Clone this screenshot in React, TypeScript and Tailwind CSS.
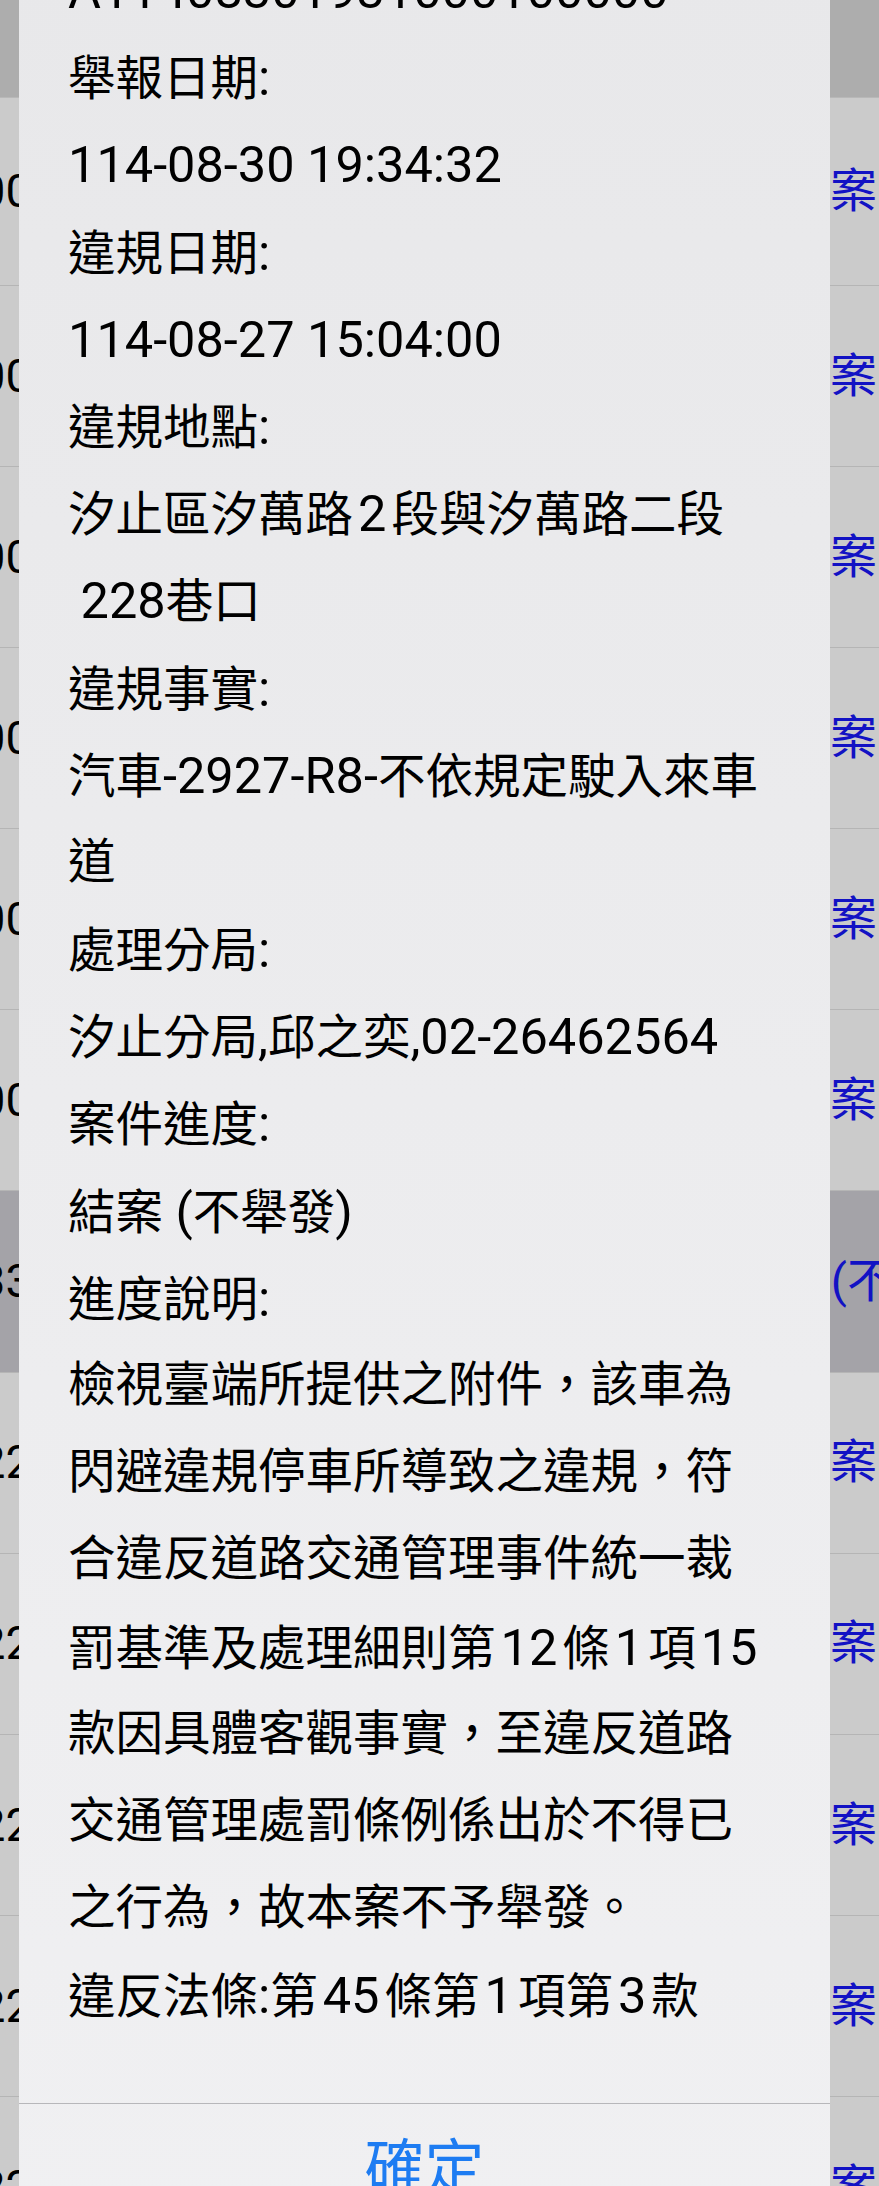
import React from 'react';

const renderLine = (text: string) =>
    text.split(/(\[[^\]]+\]|[\x20-\u02FF]+)/).filter(Boolean).map((part, i) => {
        if (part.startsWith('[') && part.endsWith(']') && part.length > 2) {
            return <span key={i} className="mx-[5px] text-[50.5px]">{part.slice(1, -1)}</span>;
        }
        if (/^[\x20-\u02FF]+$/.test(part)) {
            return <span key={i} className="text-[50.5px]">{part}</span>;
        }
        return <span key={i}>{part}</span>;
    });

const lines: string[] = [
    'A11408301931000100000',
    '舉報日期:',
    '114-08-30 19:34:32',
    '違規日期:',
    '114-08-27 15:04:00',
    '違規地點:',
    '汐止區汐萬路[2]段與汐萬路二段',
    ' 228巷口',
    '違規事實:',
    '汽車-2927-R8-不依規定駛入來車',
    '道',
    '處理分局:',
    '汐止分局,邱之奕,02-26462564',
    '案件進度:',
    '結案 (不舉發)',
    '進度說明:',
    '檢視臺端所提供之附件，該車為',
    '閃避違規停車所導致之違規，符',
    '合違反道路交通管理事件統一裁',
    '罰基準及處理細則第[12]條[1]項[15]',
    '款因具體客觀事實，至違反道路',
    '交通管理處罰條例係出於不得已',
    '之行為，故本案不予舉發。',
    '違反法條:第[45]條第[1]項第[3]款',
];

// rows of the dimmed list behind the alert
const rows = [
    { left: '00', right: '案', dark: false, first: true },
    { left: '00', right: '案', dark: false },
    { left: '00', right: '案', dark: false },
    { left: '00', right: '案', dark: false },
    { left: '00', right: '案', dark: false },
    { left: '00', right: '案', dark: false },
    { left: '33', right: '(不舉發)', dark: true },
    { left: '22', right: '案', dark: false },
    { left: '22', right: '案', dark: false },
    { left: '22', right: '案', dark: false },
    { left: '22', right: '案', dark: false },
    { left: '22', right: '案', dark: false },
];

const App: React.FC = () => {
    return (
        <div className="relative w-[879px] h-[2186px] overflow-hidden bg-[#cbcbcb] font-['Roboto','Noto_Sans_CJK_TC',sans-serif]">
            {/* background list */}
            <div className="flex flex-col">
                <div className="h-[98px] shrink-0 bg-[#adadad] border-b border-[#b8b8b8]" />
                {rows.map((row, i) => (
                    <div
                        key={i}
                        className={`${row.first ? 'h-[188px]' : 'h-[181.1px]'} shrink-0 flex items-center border-b border-[#b5b5b5] text-[47px] ${row.dark ? 'bg-[#a4a3a8]' : 'bg-[#cbcbcb]'}`}
                    >
                        <div className="-ml-[21px] w-[60px] text-black whitespace-nowrap">{row.left}</div>
                        <div className={`ml-[791px] whitespace-nowrap text-[#1212c4] ${row.dark ? 'pl-[8px]' : ''}`}>
                            {row.right}
                        </div>
                    </div>
                ))}
            </div>

            {/* alert */}
            <div className="absolute left-[19px] top-[-53px] w-[811px] bg-linear-to-b from-[#e8e8ea] to-[#f0f0f2]">
                <div className="pl-[49px] pr-[30px] pb-[63px] text-[47.5px] text-black">
                    {lines.map((line, i) => (
                        <div key={i} className="h-[87.2px] leading-[87.2px] whitespace-pre">
                            {renderLine(line)}
                        </div>
                    ))}
                </div>
                <div className="border-t border-[#b7b7ba] h-[132px] flex items-center justify-center text-[60px] text-[#1d7cf2]">
                    確定
                </div>
            </div>
        </div>
    );
};

export default App;
